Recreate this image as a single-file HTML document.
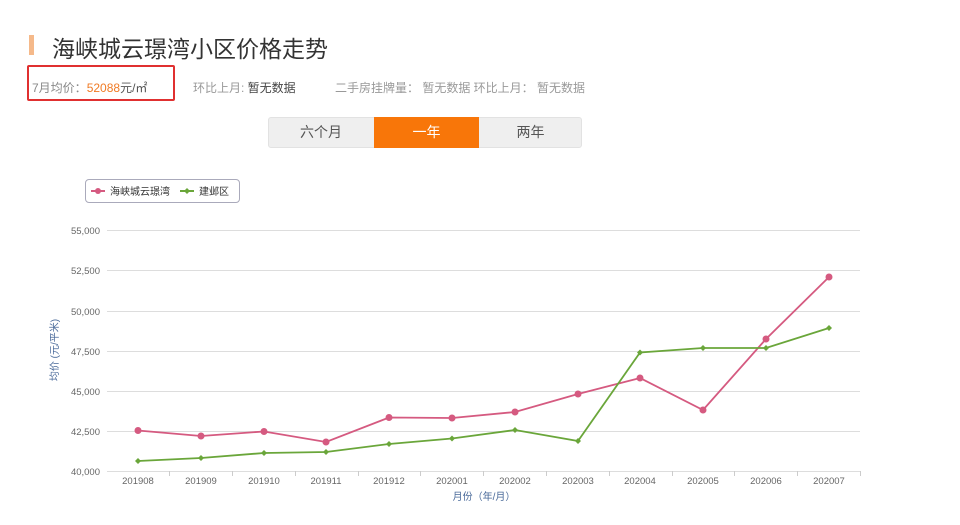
<!DOCTYPE html>
<html><head><meta charset="utf-8"><style>
body{margin:0;width:960px;height:525px;background:#fff;font-family:"Liberation Sans","Noto Sans CJK SC",sans-serif;position:relative;overflow:hidden}
.a{position:absolute;white-space:nowrap}
</style></head><body>
<div class="a" style="left:29px;top:35px;width:5px;height:20px;background:#f5b98a"></div>
<div class="a" style="left:52px;top:30px;font-size:23px;color:#333">海峡城云璟湾小区价格走势</div>
<div class="a" style="left:27px;top:65px;width:148px;height:36px;border:2px solid #e03030;border-radius:2px;box-sizing:border-box"></div>
<div class="a" style="left:32px;top:79px;font-size:12px;color:#888">7月均价：<span style="color:#f07a24">52088</span><span style="color:#555">元/㎡</span></div>
<div class="a" style="left:193px;top:79px;font-size:12px;color:#999">环比上月: <span style="color:#444">暂无数据</span></div>
<div class="a" style="left:335px;top:79px;font-size:12px;color:#999">二手房挂牌量： 暂无数据 环比上月： 暂无数据</div>
<div class="a" style="left:268px;top:117px;width:314px;height:31px;background:#efefef;border:1px solid #e2e2e2;border-radius:3px;box-sizing:border-box"></div>
<div class="a" style="left:268px;top:117px;width:106px;height:31px;line-height:31px;text-align:center;font-size:14px;color:#555">六个月</div>
<div class="a" style="left:374px;top:117px;width:105px;height:31px;line-height:31px;text-align:center;font-size:14px;color:#fff;background:#f87609">一年</div>
<div class="a" style="left:479px;top:117px;width:103px;height:31px;line-height:31px;text-align:center;font-size:14px;color:#555">两年</div>
<div class="a" style="left:85px;top:179px;width:155px;height:24px;border:1px solid #aab;border-radius:4px;box-sizing:border-box"></div>
<svg class="a" style="left:0;top:0" width="960" height="525" font-family="Liberation Sans,Noto Sans CJK SC,sans-serif">
<g stroke="#d55a80" stroke-width="2"><line x1="91" y1="191" x2="105" y2="191"/></g><circle cx="98" cy="191" r="3" fill="#d55a80"/>
<text x="110" y="195" font-size="10" fill="#333">海峡城云璟湾</text>
<line x1="180" y1="191" x2="194" y2="191" stroke="#6aa63a" stroke-width="2"/><path d="M187 188l3 3-3 3-3-3z" fill="#6aa63a"/>
<text x="199" y="195" font-size="10" fill="#333">建邺区</text>
<g stroke="#ddd" stroke-width="1">
<line x1="107" y1="230.5" x2="860" y2="230.5"/><line x1="107" y1="270.5" x2="860" y2="270.5"/><line x1="107" y1="311.5" x2="860" y2="311.5"/><line x1="107" y1="351.5" x2="860" y2="351.5"/><line x1="107" y1="391.5" x2="860" y2="391.5"/><line x1="107" y1="431.5" x2="860" y2="431.5"/><line x1="107" y1="471.5" x2="860" y2="471.5"/>
</g>
<g stroke="#ccc"><line x1="169.5" y1="471" x2="169.5" y2="476"/><line x1="232.5" y1="471" x2="232.5" y2="476"/><line x1="295.5" y1="471" x2="295.5" y2="476"/><line x1="358.5" y1="471" x2="358.5" y2="476"/><line x1="420.5" y1="471" x2="420.5" y2="476"/><line x1="483.5" y1="471" x2="483.5" y2="476"/><line x1="546.5" y1="471" x2="546.5" y2="476"/><line x1="609.5" y1="471" x2="609.5" y2="476"/><line x1="672.5" y1="471" x2="672.5" y2="476"/><line x1="734.5" y1="471" x2="734.5" y2="476"/><line x1="797.5" y1="471" x2="797.5" y2="476"/><line x1="860.5" y1="471" x2="860.5" y2="476"/></g>
<g font-size="9.5" fill="#666" text-anchor="end">
<text x="100" y="234">55,000</text><text x="100" y="274">52,500</text><text x="100" y="315">50,000</text><text x="100" y="355">47,500</text><text x="100" y="395">45,000</text><text x="100" y="435">42,500</text><text x="100" y="475">40,000</text>
</g>
<g font-size="9.5" fill="#666" text-anchor="middle">
<text x="138" y="484">201908</text><text x="201" y="484">201909</text><text x="264" y="484">201910</text><text x="326" y="484">201911</text><text x="389" y="484">201912</text><text x="452" y="484">202001</text><text x="515" y="484">202002</text><text x="578" y="484">202003</text><text x="640" y="484">202004</text><text x="703" y="484">202005</text><text x="766" y="484">202006</text><text x="829" y="484">202007</text>
</g>
<text x="484" y="500" font-size="10" fill="#4a6a9a" text-anchor="middle">月份（年/月）</text>
<text transform="translate(58,350) rotate(-90)" font-size="10" fill="#4a6a9a" text-anchor="middle">均价 (元/平米)</text>
<polyline fill="none" stroke="#d55a80" stroke-width="1.8" points="138,430.5 201,436 264,431.5 326,442 389,417.5 452,418 515,412 578,394 640,378 703,410 766,339 829,277"/>
<g fill="#d55a80"><circle cx="138" cy="430.5" r="3.5"/><circle cx="201" cy="436" r="3.5"/><circle cx="264" cy="431.5" r="3.5"/><circle cx="326" cy="442" r="3.5"/><circle cx="389" cy="417.5" r="3.5"/><circle cx="452" cy="418" r="3.5"/><circle cx="515" cy="412" r="3.5"/><circle cx="578" cy="394" r="3.5"/><circle cx="640" cy="378" r="3.5"/><circle cx="703" cy="410" r="3.5"/><circle cx="766" cy="339" r="3.5"/><circle cx="829" cy="277" r="3.5"/></g>
<polyline fill="none" stroke="#6aa63a" stroke-width="1.8" points="138,461 201,458 264,453 326,452 389,444 452,438.5 515,430 578,441 640,352.5 703,348 766,348 829,328"/>
<g fill="#6aa63a"><path d="M138 458l3 3-3 3-3-3z"/><path d="M201 455l3 3-3 3-3-3z"/><path d="M264 450l3 3-3 3-3-3z"/><path d="M326 449l3 3-3 3-3-3z"/><path d="M389 441l3 3-3 3-3-3z"/><path d="M452 435.5l3 3-3 3-3-3z"/><path d="M515 427l3 3-3 3-3-3z"/><path d="M578 438l3 3-3 3-3-3z"/><path d="M640 349.5l3 3-3 3-3-3z"/><path d="M703 345l3 3-3 3-3-3z"/><path d="M766 345l3 3-3 3-3-3z"/><path d="M829 325l3 3-3 3-3-3z"/></g>
</svg>
</body></html>
